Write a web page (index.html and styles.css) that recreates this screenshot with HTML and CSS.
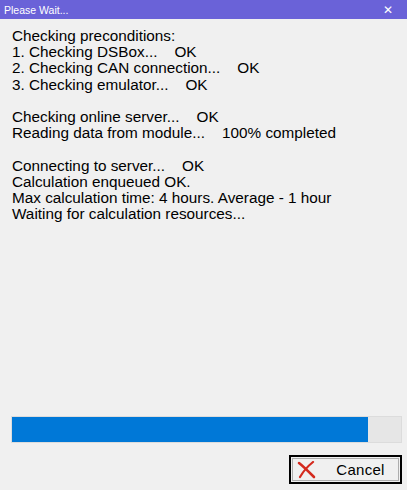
FILE: index.html
```html
<!DOCTYPE html>
<html lang="en">
<head>
  <meta charset="UTF-8">
  <title>Please Wait...</title>
  <link rel="stylesheet" href="styles.css">
</head>
<body>

  <div class="window">
    <div class="titlebar">
      <span class="title">Please Wait...</span>
      <span class="close">&#x2715;</span>
    </div>

    <div class="content">
      <div class="log">
        <p>Checking preconditions:</p>
        <p>1. Checking DSBox...&nbsp;&nbsp;&nbsp;&nbsp;OK</p>
        <p>2. Checking CAN connection...&nbsp;&nbsp;&nbsp;&nbsp;OK</p>
        <p>3. Checking emulator...&nbsp;&nbsp;&nbsp;&nbsp;OK</p>
        <p>&nbsp;</p>
        <p>Checking online server...&nbsp;&nbsp;&nbsp;&nbsp;OK</p>
        <p>Reading data from module...&nbsp;&nbsp;&nbsp;&nbsp;100% completed</p>
        <p>&nbsp;</p>
        <p>Connecting to server...&nbsp;&nbsp;&nbsp;&nbsp;OK</p>
        <p>Calculation enqueued OK.</p>
        <p>Max calculation time: 4 hours. Average - 1 hour</p>
        <p>Waiting for calculation resources...</p>
      </div>

      <div class="progress">
        <div class="progress-fill" style="width: 91.5%"></div>
      </div>

      <div class="buttons">
        <button class="cancel">
          <svg width="20" height="18" viewBox="0 0 20 18">
            <path d="M2 2 C6 5 11 10 17 16" stroke="#d42a1e" stroke-width="2.6" fill="none" stroke-linecap="round"/>
            <path d="M16 1 C11 5 7 9 3 16" stroke="#d42a1e" stroke-width="2.2" fill="none" stroke-linecap="round"/>
          </svg>
          <span>Cancel</span>
        </button>
      </div>
    </div>
  </div>

</body>
</html>
```

FILE: styles.css
```css
body {
  margin: 0;
  font-family: "Liberation Sans", Arial, sans-serif;
  background-color: #f0f0f0;
}

.window {
  width: 407px;
  height: 490px;
  display: flex;
  flex-direction: column;
  background-color: #f0f0f0;
}

.titlebar {
  height: 19px;
  background-color: #6a62d8;
  color: white;
  display: flex;
  align-items: center;
  justify-content: space-between;
  padding: 0 14px 0 4px;
  font-size: 10.5px;
}

.close {
  font-size: 12px;
}

.content {
  flex: 1;
  display: flex;
  flex-direction: column;
  padding: 9px 5px 6px 12px;
}

.log {
  flex: 1;
  font-size: 15.3px;
  color: #000;
}

.log p {
  margin: 0;
  line-height: 16.2px;
}

.progress {
  height: 25px;
  margin: 0 0 12px -1px;
  border: 1px solid #dcdcdc;
  background-color: #e6e6e6;
}

.progress-fill {
  height: 100%;
  background-color: #0078d7;
}

.buttons {
  display: flex;
  justify-content: flex-end;
}

.cancel {
  width: 113px;
  height: 29px;
  border: 2px solid #000;
  box-shadow: inset 0 0 0 1px #f0f0f0, inset 0 0 0 2px #adadad;
  background-color: #f0f0f0;
  display: flex;
  align-items: center;
  padding: 0 0 0 6px;
  font-family: "Liberation Sans", Arial, sans-serif;
  font-size: 15px;
  color: #000;
}

.cancel span {
  flex: 1;
  text-align: center;
  padding-left: 4px;
  letter-spacing: 0.3px;
}
```
